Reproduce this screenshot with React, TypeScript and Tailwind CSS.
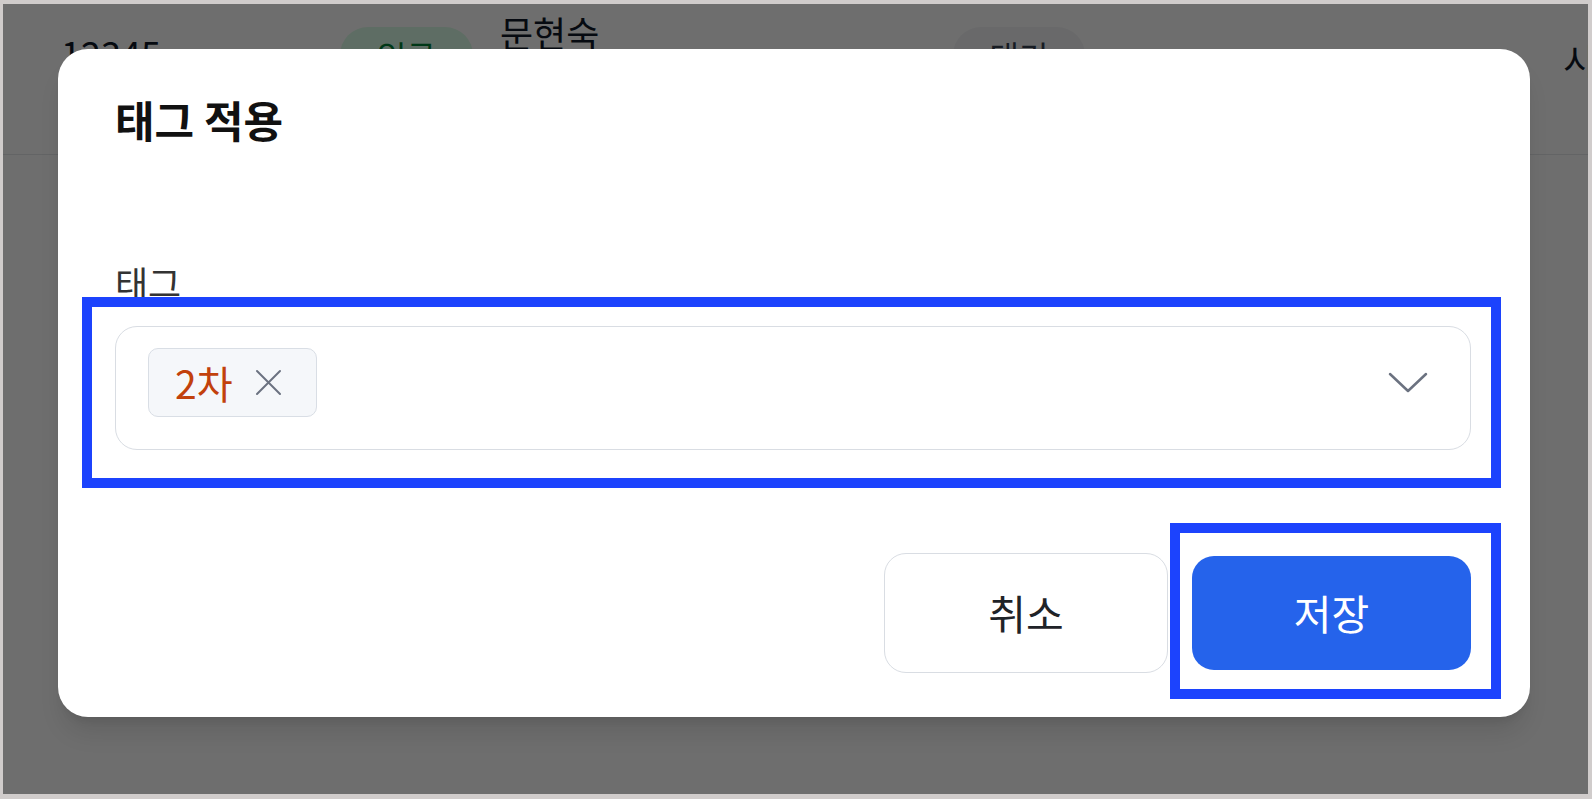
import React from 'react';

const XIcon = () => (
    <svg width="27" height="27" viewBox="0 0 27 27" fill="none" stroke="#6b7280" strokeWidth="2" strokeLinecap="round">
        <path d="M2 2 25 25M25 2 2 25" />
    </svg>
);

const Chevron = () => (
    <svg width="40" height="22" viewBox="0 0 40 22" fill="none" stroke="#6b7280" strokeWidth="2.5" strokeLinecap="round" strokeLinejoin="round">
        <path d="M2 2 20 19 38 2" />
    </svg>
);

const App: React.FC = () => (
    <div className="w-[1592px] h-[799px] bg-[#d0cccb] pt-[4px] pl-[3px] pr-[4px] pb-[5px] font-['Noto_Sans_CJK_KR','Noto_Sans',sans-serif]">
        <div className="relative h-full overflow-hidden bg-white">
            {/* page behind the dialog */}
            <div className="flex h-[151px] items-start border-b border-[#e5e7eb] text-[36px] text-gray-900">
                <span className="ml-[58px] mt-[30px] w-[279px] shrink-0 leading-none">12345</span>
                <span className="mt-[23px] flex h-[56px] w-[133px] shrink-0 items-center justify-center rounded-full bg-green-100 text-[32px] text-green-700">입금</span>
                <div className="ml-[27px] mt-[6px] w-[453px] shrink-0 leading-[44px]">
                    <div>문현숙</div>
                    <div className="text-[28px] text-gray-500">010-1234-5678</div>
                </div>
                <span className="mt-[23px] flex h-[56px] w-[132px] shrink-0 items-center justify-center rounded-full bg-gray-100 text-[32px] text-gray-700">대기</span>
                <span className="ml-[478px] mt-[37px] shrink-0 leading-none whitespace-nowrap">시작</span>
            </div>

            <div className="absolute inset-0 bg-black/[0.57]" />

            {/* dialog */}
            <div className="absolute left-[55px] top-[45px] flex h-[668px] w-[1472px] flex-col rounded-[30px] bg-white pt-[49px] pl-[57px] pr-[59px] pb-[44px] shadow-xl">
                <h2 className="text-[43px] font-bold leading-none text-[#111]">태그 적용</h2>

                <label className="mt-[123px] text-[36px] leading-none text-[#333]">태그</label>

                <div className="mt-[26px] flex h-[124px] items-center rounded-[22px] border border-[#d9dde3] pl-[32px] pr-[42px] pb-[11px]">
                    <div className="flex h-[69px] items-center gap-[22px] rounded-[10px] border border-[#d9dee5] bg-[#f5f7fa] pl-[26px] pr-[34px]">
                        <span className="text-[39px] leading-none text-[#c2410c]">2차</span>
                        <XIcon />
                    </div>
                    <div className="ml-auto">
                        <Chevron />
                    </div>
                </div>

                <div className="mt-[103px] flex items-center justify-end gap-[24px]">
                    <button className="flex h-[120px] w-[284px] items-center justify-center rounded-[22px] border border-[#d9dde3] bg-white text-[41px] text-[#1f2328]">
                        취소
                    </button>
                    <button className="flex h-[114px] w-[279px] items-center justify-center rounded-[22px] bg-[#2563eb] text-[41px] text-white">
                        저장
                    </button>
                </div>
            </div>

            {/* highlight boxes */}
            <div className="absolute left-[79px] top-[293px] h-[191px] w-[1419px] border-[10px] border-[#1c43fd]" />
            <div className="absolute left-[1167px] top-[519px] h-[176px] w-[331px] border-[10px] border-[#1c43fd]" />
        </div>
    </div>
);

export default App;
